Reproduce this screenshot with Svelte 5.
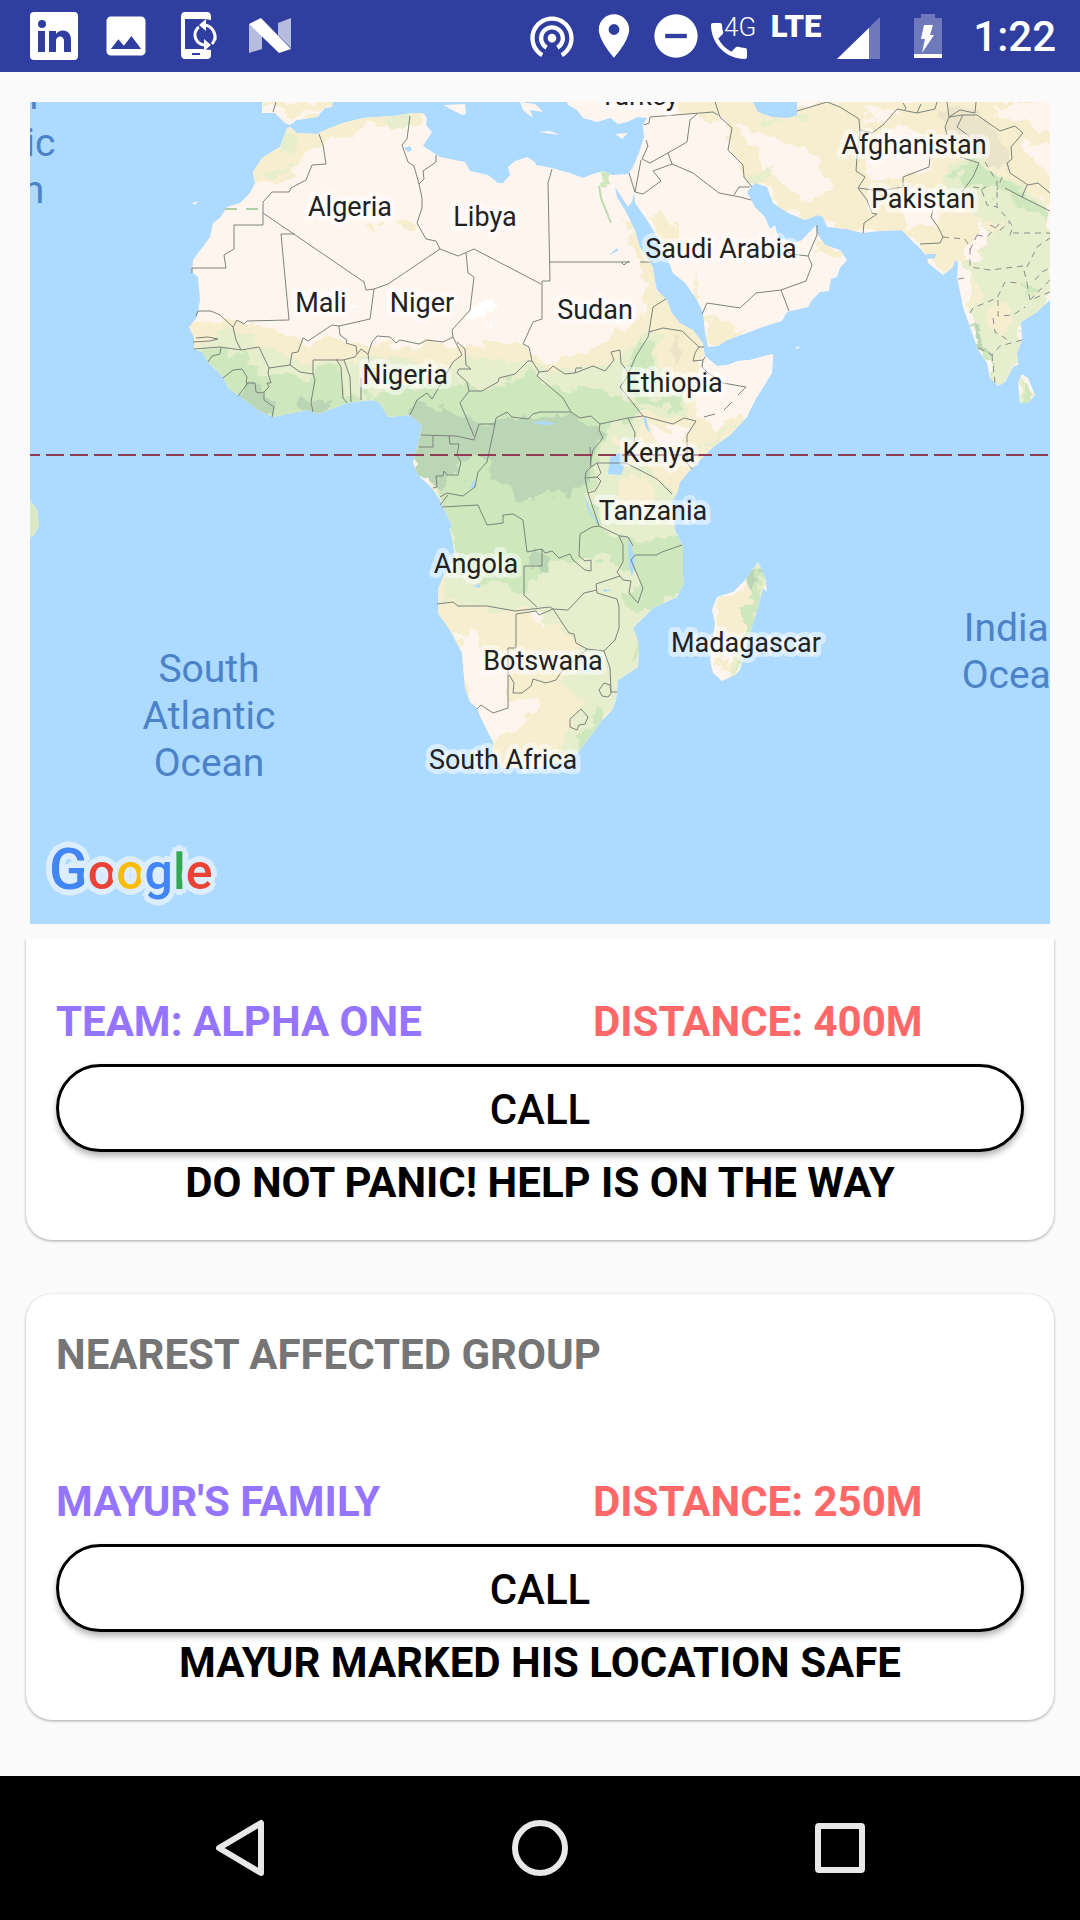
<script>
  const land =
    'M290 127 297 133 317 134 330 128 343 123 363 118 393 116 413 113 423 113 427 118 426 125 432 132 423 146 440 157 465 162 470 171 488 175 498 183 503 183 510 175 508 167 515 161 527 157 535 162 536 165 552 168 570 173 583 178 593 174 603 171 612 175 628 174 633 167 640 150 644 137 643 125 647 118 638 117 627 122 618 124 610 118 597 122 583 118 577 110 568 105 567 102 1050 102 1050 300 1037 312 1021 322 1022 340 1017 353 1018 365 1013 367 1005 382 998 386 990 378 987 363 978 350 970 327 963 307 957 277 958 263 955 259 953 267 943 275 928 263 927 257 920 248 913 242 902 230 880 231 862 233 847 229 827 227 823 217 818 215 805 220 788 213 773 203 767 187 755 183 747 192 755 207 765 217 770 229 775 225 778 237 795 243 802 240 816 225 817 233 825 245 840 250 847 260 840 268 837 277 831 279 829 291 820 292 812 300 808 307 787 312 782 321 760 328 747 333 727 340 718 346 707 347 703 345 705 356 717 366 728 365 738 361 750 360 773 354 772 373 755 400 747 417 730 435 713 447 692 468 680 482 677 493 671 503 675 530 683 547 683 577 684 583 677 597 653 608 633 628 639 643 638 667 618 680 616 700 612 710 602 720 593 733 578 752 567 760 543 767 515 768 502 768 493 753 493 742 482 720 477 708 470 702 465 687 462 653 450 630 438 613 438 590 443 577 455 560 453 543 450 530 452 525 443 507 440 500 432 488 418 475 413 463 418 443 422 425 410 415 388 417 380 403 372 400 347 403 318 414 307 410 273 417 258 410 238 395 228 388 223 377 208 362 202 352 194 349 194 337 189 327 197 317 200 300 198 277 192 272 193 260 210 237 213 223 220 218 227 207 240 203 250 193 255 183 253 172 262 158 280 147 287 128Z' +
    'M262 102 262 113 275 113 285 123 290 125 297 120 317 117 325 108 332 107 333 102Z' +
    'M443 105 462 115 466 114 465 104ZM520 102 523 110 533 118 530 110 543 112 535 104ZM538 132 560 135 550 131ZM615 134 622 139 628 133Z' +
    'M758 562 765 577 767 592 763 588 758 607 750 633 740 670 735 675 722 681 713 673 710 660 715 623 712 610 717 597 733 592 745 580Z' +
    'M1022 374 1028 378 1035 395 1028 403 1020 403 1018 383ZM30 500 37 510 39 525 34 535 30 537ZM192 203 198 201 195 205ZM795 348 800 346 798 349Z'

  const beige = [
    'M250 185 275 187 298 177 290 168 312 150 345 135 365 130 393 121 420 122 430 108 400 100 285 115 245 150Z',
    'M180 322 225 324 258 322 285 328 305 342 340 338 372 345 410 342 450 346 520 345 540 360 572 358 606 345 614 328 640 318 645 290 638 250 622 215 640 225 665 300 708 345 702 365 690 385 700 420 735 410 748 425 650 540 650 780 480 780 430 620 430 400 180 380Z',
    'M645 100 690 112 722 120 730 150 745 175 800 222 830 228 905 235 930 252 945 278 970 255 990 200 1000 185 1050 200 1050 100Z',
    'M645 220 660 210 678 225 682 245 668 250ZM690 270 704 296 696 300ZM705 315 716 318 745 333 708 350ZM816 240 840 250 836 258 820 254ZM715 600 745 580 758 600 735 670 715 668Z',
    'M262 100 335 100 332 108 290 125ZM370 225 382 222 376 232ZM395 220 420 222 412 233 398 228Z'
  ]
  const pink = [
    'M700 360 775 350 770 382 752 408 715 428 698 415 702 390Z',
    'M462 630 480 640 482 660 505 665 510 700 540 695 530 720 500 735 492 745 470 705 458 650Z',
    'M650 425 690 425 684 448 655 445ZM665 130 712 125 726 160 742 185 700 172 672 155Z',
    'M735 125 765 130 790 150 820 155 830 190 800 200 770 175ZM872 140 900 125 930 140 928 165 900 178 868 182ZM898 195 930 192 940 225 912 228ZM990 104 1050 104 1050 130 1030 125 1000 118Z',
    'M860 110 900 108 885 120 868 122ZM1022 140 1050 150 1050 175 1030 165Z',
    'M720 635 735 640 730 662 720 660ZM520 600 545 618 530 625Z'
  ]
  const light = [
    'M192 350 210 333 240 333 262 345 312 368 392 352 425 370 467 357 527 362 545 375 612 362 642 335 665 335 655 355 668 385 690 395 680 415 640 418 640 440 610 440 640 470 670 490 690 500 690 610 640 620 650 680 618 700 580 756 558 752 585 700 560 680 580 650 560 625 520 610 445 603 440 560 452 520 400 430 190 400Z',
    'M258 130 285 130 300 148 285 160 275 150ZM262 172 292 165 270 180ZM380 113 415 115 398 124ZM748 180 760 185 780 160 748 178Z',
    'M945 195 950 165 985 155 1000 175 1050 205 1050 305 1020 325 1020 360 1000 390 980 350 968 300 962 262 985 260 985 225 965 200Z',
    'M752 100 760 114 785 122 810 108 800 120 770 124ZM690 465 712 446 740 420 720 430Z',
    'M758 560 768 590 738 678 728 672 745 630ZM1015 370 1038 395 1020 406Z'
  ]
  const green = [
    'M195 352 225 348 245 358 262 372 300 378 338 368 345 400 380 395 440 375 475 392 530 375 560 385 595 382 620 395 645 415 605 425 600 465 590 490 605 530 640 545 688 530 688 590 640 612 625 600 640 580 615 560 560 560 520 590 460 575 445 515 440 490 400 430 320 420 270 425 195 370Z',
    'M640 340 655 350 650 375 640 395 660 400 690 395 670 410 635 405 628 375Z',
    'M950 175 975 160 990 165 1010 190 1050 208 1050 218 1000 195 970 182ZM1020 285 1035 290 1025 300ZM970 325 985 350 997 385 985 365Z',
    'M593 172 603 170 611 175 604 183ZM605 725 585 752 575 745 600 710ZM756 568 764 590 748 640 738 672 745 620Z',
    'M1022 380 1034 395 1022 404ZM635 625 645 650 630 660Z'
  ]
  const dark = [
    'M238 392 255 385 275 405 274 418 255 412ZM295 402 302 395 330 402 320 415 300 412ZM412 412 420 402 450 410 480 425 500 418 560 415 590 425 602 435 592 460 582 490 565 498 545 492 520 505 495 480 490 462 475 450 462 460 458 478 440 490 415 465Z',
    'M535 550 550 560 548 572 535 570ZM748 575 758 575 750 595ZM968 318 980 335 990 355 978 345Z'
  ]
  const grey = ['M940 115 960 112 990 130 1008 150 1008 170 985 155 955 150ZM965 118 985 116 1000 138 985 132ZM672 335 682 345 678 370 668 350Z']

  const borders =
    'M319 134 323 145 326 164 312 165 306 180 291 188 289 192 272 192 263 202 263 225 234 225 234 249 224 255 226 268 192 268 192 273' +
    'M263 213 364 282 366 290 374 289 388 284 440 249M295 234 281 234 289 320 247 321 244 324 237 320 233 327 220 315 211 311 198 311 196 316' +
    'M374 289 370 319 339 326 332 325 308 341 303 338 298 352 292 353 290 365 269 368M233 327 236 340 241 350 259 347 269 368 268 373 271 383 267 383 269 387 264 392 264 400 274 407 272 417' +
    'M194 349 220 347 241 350M196 338 208 337 218 339 210 341 193 342M221 347 220 354 212 356 208 362M223 378 233 370 242 369 247 377 246 383 255 383 256 392 260 393 264 392M248 383 238 396' +
    'M290 365 300 372 313 374 315 380 311 402 313 412M313 374 313 360 343 360 355 357 361 349 368 354 372 342 377 336 390 337M336 359 341 367 343 398 347 403M344 360 350 377 351 402M361 400 361 378M339 326 340 335 347 340 346 343 356 346 357 354M368 354 369 363' +
    'M410 116 407 139 402 145 408 162 414 166 419 184 422 198 422 208 417 223 426 239 436 241 440 249 458 256 474 249 541 284M436 155 436 162 423 171 424 179 419 184' +
    'M552 169 548 183 550 281 542 281 542 319 533 322 523 344 529 347 532 361 539 372M550 262 630 262M621 262 624 265 629 261M640 262 653 262' +
    'M466 253 468 273 474 277 470 310 452 330 453 337 443 342 427 340 419 344 400 340 396 343 390 337M453 337 462 355 453 362 443 380 432 399 427 393 417 400 410 415' +
    'M457 342 465 349 466 365 471 369 459 369 457 373 467 382 469 391 460 403 474 436M469 391 482 391 498 382 499 378 515 374 528 361 532 361' +
    'M539 372 537 376 563 398 571 412 580 418 591 416 600 424 628 418 643 416M571 412 540 412 533 414 528 419 512 417 507 412 496 418 495 424 479 424 474 440 456 436 421 435M495 424 487 462 478 472 475 487 463 496 447 493 440 497' +
    'M539 372 548 371 553 366 565 374 575 373 593 366 605 371 614 360 611 352 620 350 621 363 628 372M575 373 576 368 582 368' +
    'M666 299 653 307 649 332 648 337 636 356 627 377 620 387 643 416M649 332 663 328 682 331 699 347 704 347M699 347 695 353 693 361 703 360 705 357M703 360 702 367 708 373 723 383 746 387 738 395M732 402 724 410M715 414 704 417' +
    'M643 416 673 424 684 418 696 421 687 435 687 463 692 469M628 418 635 433 634 442M600 424 599 430 603 438 593 450 590 465M597 463 626 463 657 479 672 494' +
    'M590 447 591 467 586 472 585 478 588 493 599 526 620 536 628 537 633 546M591 467 597 463 601 473 597 477 601 481 595 491 588 493M585 478 597 477' +
    'M682 545 662 552 656 555 635 555 631 560 643 588 638 603 629 593 631 581 623 580 617 572 623 562 623 545 619 536' +
    'M599 526 592 527 580 534 579 556 585 561 591 560 591 571 585 570 573 560 570 554 559 558 552 551 545 553 542 549 527 552 523 520 513 514 503 515 503 523 487 525 478 505 442 507M440 505 448 495M542 549 542 566 524 566 524 595 537 607' +
    'M437 604 453 602 458 606 487 606 515 611 550 607 553 609 568 610 584 593 597 590M620 576 596 584 597 593 617 599 619 607 619 628 615 640 604 651 587 649 576 643 574 634 569 633 553 609' +
    'M508 708 508 648 516 648 516 614 536 611 539 615 553 609M508 673 514 683 513 693 522 693 531 686 533 679 546 683 556 680 562 671 587 649M477 709 481 705 493 713 508 708' +
    'M604 651 610 668 611 692 617 692M604 683 610 685 611 693 608 697 602 696 599 690ZM581 709 588 717 585 724 579 725 577 730 570 727 570 719Z' +
    'M419 447 433 447 433 436M449 436 450 444 459 444 457 455 461 462 458 475 447 475 444 471 443 476 436 476 437 487 433 488' +
    'M644 125 649 123 650 117 713 112 718 115M697 114 690 120 687 142 650 163 642 159 648 146 646 140M668 153 672 164 653 171 661 181 643 194 635 192 641 160M629 173 635 192M672 164 693 173 719 193 740 197 751 200M715 102 720 117 732 128 728 150 743 165 744 177 752 187M734 195 739 187 750 187' +
    'M702 314 707 303 740 308 756 293 781 290 806 281 812 265 808 256 817 235 817 225M781 290 789 311M808 256 790 254 780 242M797 111 827 102 840 107 859 119 860 133 857 157 856 171 865 177 858 188 867 200 872 213 877 214 864 223 863 233' +
    'M858 188 880 191 903 187 903 177 929 167 930 157M860 130 872 133 883 125 897 109 917 113 935 109 937 102M947 102 949 117 963 115 957 127 970 137M960 157 979 163 973 177 962 192M949 117 945 127 947 135M933 210 931 217 938 227 943 237 940 243 920 244' +
    'M903 103 906 108 904 111M917 113 921 104M949 117 960 110 975 113 976 102M963 115 977 115 1000 131 1015 126 1023 133 1011 147 1012 159 1007 163 1010 173 1028 185 1038 183 1050 193M1005 188 1022 197 1050 211M1027 185 1022 197M276 102 273 112'

  const states =
    'M985 162 997 182 997 207 1007 218 1013 227 1008 240M973 187 981 188 987 205 997 207M981 190 990 184M1002 177 997 190M943 237 965 239 970 247 970 267 990 270 1023 266 1027 283M977 235 987 237 1000 223M970 250 977 235M1013 233 1050 233M1027 267 1037 247 1050 238M970 313 973 308 997 298 1005 282 1020 283M998 300 998 316 1013 315 1025 307M993 318 995 332 1008 340M1022 340 1000 346 992 355 977 347M992 355 995 383M1030 300 1050 280M1027 283 1030 300 1050 292M1035 280 1042 272 1050 268M958 279 965 278M990 225 1000 230 1010 222'

  const labels = [
    ['Turkey', 639, 105], ['Afghanistan', 914, 154], ['Pakistan', 923, 208], ['Algeria', 350, 216],
    ['Libya', 485, 226], ['Saudi Arabia', 721, 258], ['Mali', 321, 312], ['Niger', 422, 312],
    ['Sudan', 595, 319], ['Nigeria', 405, 384], ['Ethiopia', 674, 392], ['Kenya', 659, 462],
    ['Tanzania', 653, 520], ['Angola', 476, 573], ['Madagascar', 746, 652], ['Botswana', 543, 670],
    ['South Africa', 503, 769]
  ]
  const oceans = [
    ['North', -11, 109], ['Atlantic', -11, 156], ['Ocean', -11, 203],
    ['South', 209, 682], ['Atlantic', 209, 729], ['Ocean', 209, 776],
    ['Indian', 1017, 641], ['Ocean', 1017, 688]
  ]
  const google = [['o', '#ea4335'], ['o', '#fbbc05'], ['g', '#4285f4'], ['l', '#34a853'], ['e', '#ea4335']]
</script>

{#snippet details(name, distance, note)}
  <div class="row">
    <p class="name">{name}</p>
    <p class="distance">{distance}</p>
  </div>
  <button class="call" type="button">CALL</button>
  <p class="note">{note}</p>
{/snippet}

<div class="screen">
  <header class="status">
    <div class="notices">
      <svg viewBox="28 10 52 52" aria-hidden="true">
        <rect x="30" y="12" width="48" height="48" rx="4" fill="#fff" />
        <g fill="#303f9f">
          <circle cx="42" cy="24" r="4" />
          <rect x="38" y="31" width="7" height="21" />
          <path d="M49 31h7v3c3-5 15-6 15 6v12h-7V41c0-6-8-6-8 0v11h-7z" />
        </g>
      </svg>
      <svg viewBox="0 0 24 24" aria-hidden="true">
        <path fill="#fff" d="M21 19V5c0-1.100-.9-2-2-2H5c-1.100 0-2 .9-2 2v14c0 1.100.9 2 2 2h14c1.100 0 2-.9 2-2zM8.500 13.500l2.500 3.010L14.500 12l4.500 6H5l3.500-4.500z" />
      </svg>
      <svg viewBox="174 10 52 52" aria-hidden="true">
        <path fill="#fff" fill-rule="evenodd" d="M187 12h22q4 0 4 5v3l-6-1h-20v30h16l10 1v5q0 4-4 4h-22q-4 0-4-5V17q0-5 4-5zM194 53v2h8v-2z" />
        <g fill="none" stroke="#fff" stroke-width="3">
          <path d="M207 25c7 1 11 8 10 15M217 38q-1 4-3 6" />
          <path d="M206 45c-7-1-11-8-8-15M198 31q1-3 3-4" />
        </g>
        <path fill="#fff" d="M208 19v12l-7-6zM206 39v12l7-6z" />
      </svg>
      <svg viewBox="244 10 52 52" aria-hidden="true">
        <path fill="#fff" opacity=".65" d="M249 24l13 11v14l-13 4zM278 23l13-5v30l-13-13z" />
        <path fill="#fff" d="M249 24l12-6 30 31-12 4z" />
      </svg>
    </div>
    <div class="tray">
      <svg viewBox="0 0 24 24" aria-hidden="true">
        <path fill="#fff" d="M12 11c-1.100 0-2 .9-2 2s.9 2 2 2 2-.9 2-2-.9-2-2-2zm6 2c0-3.310-2.690-6-6-6s-6 2.690-6 6c0 2.220 1.210 4.150 3 5.190l1-1.740c-1.190-.7-2-1.970-2-3.450 0-2.210 1.790-4 4-4s4 1.790 4 4c0 1.480-.81 2.750-2 3.450l1 1.740c1.790-1.040 3-2.970 3-5.190zM12 3C6.480 3 2 7.480 2 13c0 3.700 2.010 6.920 4.990 8.650l1-1.730C5.610 18.530 4 15.960 4 13c0-4.420 3.580-8 8-8s8 3.580 8 8c0 2.960-1.610 5.530-4 6.920l1 1.730c2.990-1.730 5-4.950 5-8.650 0-5.520-4.480-10-10-10z" />
      </svg>
      <svg viewBox="0 0 24 24" aria-hidden="true">
        <path fill="#fff" d="M12 2C8.130 2 5 5.130 5 9c0 5.250 7 13 7 13s7-7.750 7-13c0-3.870-3.130-7-7-7zm0 9.500a2.500 2.500 0 0 1 0-5 2.500 2.500 0 0 1 0 5z" />
      </svg>
      <svg viewBox="0 0 24 24" aria-hidden="true">
        <circle cx="12" cy="12" r="10" fill="#fff" />
        <path fill="#303f9f" d="M7 11h10v2H7z" />
      </svg>
      <svg class="volte" viewBox="708 10 48 52" aria-hidden="true">
        <path fill="#fff" transform="translate(704 17) scale(2)" d="M20 15.500c-1.250 0-2.450-.2-3.570-.57-.35-.11-.74-.03-1.020.24l-2.200 2.200c-2.830-1.440-5.150-3.750-6.590-6.590l2.200-2.210c.28-.26.36-.65.25-1C8.700 6.450 8.500 5.250 8.500 4c0-.55-.45-1-1-1H4c-.55 0-1 .45-1 1 0 9.390 7.610 17 17 17 .55 0 1-.45 1-1v-3.500c0-.55-.45-1-1-1z" />
        <text x="723" y="36" class="fourg">4G</text>
      </svg>
      <span class="lte">LTE</span>
      <svg class="signal" viewBox="837 10 44 52" aria-hidden="true">
        <path fill="#fff" opacity=".3" d="M880 17v42h-43z" />
        <path fill="#fff" d="M869 28v31h-32z" />
      </svg>
      <svg class="battery" viewBox="914 10 28 52" aria-hidden="true">
        <path fill="#fff" fill-opacity=".3" d="M921 14h14v4h7v36h-28V18h7z" />
        <path fill="#fff" d="M914 54h28v4h-28zM924 25h9l-3 10h4l-12 18 3-14h-4z" />
      </svg>
      <time class="clock">1:22</time>
    </div>
  </header>

  <main>
    <svg class="map" viewBox="30 102 1020 822" role="img" aria-label="Map of Africa">
      <defs>
        <clipPath id="land"><path d={land} /></clipPath>
        <filter id="ragged" x="0" y="0" width="100%" height="100%" filterUnits="objectBoundingBox">
          <feTurbulence type="fractalNoise" baseFrequency="0.05" numOctaves="4" seed="4" />
          <feDisplacementMap in="SourceGraphic" scale="26" xChannelSelector="R" yChannelSelector="G" />
        </filter>
      </defs>
      <rect x="30" y="102" width="1020" height="822" fill="#addaff" />
      <path d={land} fill="#fff5ef" />
      <g clip-path="url(#land)">
        <g filter="url(#ragged)">
          <rect x="0" y="60" width="1100" height="900" fill="none" />
          <path d={beige.join('')} fill="#f7eecf" />
          <path d={pink.join('')} fill="#fff5ef" />
          <path d={light.join('')} fill="#e6eece" />
          <path d={green.join('')} fill="#cee7bc" />
          <path d={dark.join('')} fill="#bbd6b5" />
          <path d={grey.join('')} fill="#e6dfc8" opacity=".7" />
          <path fill="#f7eecf" d="M965 270 985 300 970 308ZM985 225 1003 222 990 240ZM995 300 1012 305 1000 335 988 325ZM612 482 640 478 655 495 650 512 622 510Z" />
          <path fill="#fff" d="M475 307 495 304 488 316 470 318ZM483 326 492 322 484 328ZM350 308 360 310 352 312Z" />
        </g>
        <path d="M28 495h14v45H28z" fill="#dbe9c6" />
        <path d="M599 186l2 12 10 25" fill="none" stroke="#bcdcb0" stroke-width="2" />
      </g>
      <g fill="#addaff">
        <path d="M615 187 617 197 625 210 635 230 640 247 653 267 655 280 657 290 667 300 672 313 680 323 693 330 703 343 706 350 708 347 705 333 703 313 697 300 685 283 673 273 668 260 657 237 647 220 635 203 634 193 632 202 628 207Z" />
        <path d="M753 102 758 112 772 117 788 118 797 115 797 102Z" />
        <path d="M610 457 619 453 627 455 624 467 621 475 608 474ZM404 148 410 146 412 150 408 152ZM473 586 480 584 480 588ZM530 422 545 421 557 424 545 425ZM475 478 475 487 470 489ZM926 254 936 254 935 258 927 259Z" />
        <path d="M585 495 590 510 600 528 596 523 587 508ZM628 538 634 555 635 562 632 577 629 565ZM643 417 646 418 650 433 646 428ZM603 589 612 590 604 592ZM609 255 617 248 618 251Z" />
      </g>
      <path class="border" d={borders} />
      <path class="border states" d={states} />
      <path d="M225 209h12M246 209h12" stroke="#b0cfa8" stroke-width="2" />
      <path class="equator" d="M22 455H1050" />
      {#each oceans as [text, x, y]}
        <text class="ocean" {x} {y}>{text}</text>
      {/each}
      {#each labels as [text, x, y]}
        <text class="country" {x} {y}>{text}</text>
      {/each}
      <text class="google" x="49" y="889"><tspan class="initial" fill="#4285f4">G</tspan>{#each google as [letter, fill]}<tspan {fill}>{letter}</tspan>{/each}</text>
    </svg>

    <div class="list">
      <article class="card scrolled">
        {@render details('TEAM: ALPHA ONE', 'DISTANCE: 400M', 'DO NOT PANIC! HELP IS ON THE WAY')}
      </article>
      <article class="card">
        <h2>NEAREST AFFECTED GROUP</h2>
        {@render details("MAYUR'S FAMILY", 'DISTANCE: 250M', 'MAYUR MARKED HIS LOCATION SAFE')}
      </article>
    </div>
  </main>

  <nav class="keys">
    <button type="button" aria-label="Back">
      <svg viewBox="210 1818 60 60"><path d="M261 1823v50l-42-25z" /></svg>
    </button>
    <button type="button" aria-label="Home">
      <svg viewBox="510 1818 60 60"><circle cx="540" cy="1848" r="25" /></svg>
    </button>
    <button type="button" aria-label="Recent apps">
      <svg viewBox="810 1818 60 60"><rect x="818" y="1826" width="44" height="44" rx="1" /></svg>
    </button>
  </nav>
</div>

<style>
  :global(body) {
    margin: 0;
    background: #fafafa;
  }
  .screen {
    min-height: 100vh;
    display: flex;
    flex-direction: column;
    background: #fafafa;
    color: #000;
    font-family: Roboto, sans-serif;
    font-size: 42px;
    line-height: 50px;
  }
  .status {
    display: flex;
    justify-content: space-between;
    align-items: center;
    height: 72px;
    padding: 0 24px 0 28px;
    background: #303f9f;
    color: #fff;
  }
  .notices,
  .tray {
    display: flex;
    align-items: center;
  }
  .notices {
    gap: 20px;
  }
  .tray {
    gap: 10px;
  }
  .status svg {
    display: block;
    width: 52px;
    height: 52px;
    flex: none;
  }
  .status .volte {
    width: 48px;
    margin-left: -3px;
  }
  .status .signal {
    width: 44px;
    margin-left: 4px;
  }
  .status .battery {
    width: 28px;
    margin: 0 21px 0 23px;
  }
  .fourg {
    font-size: 26px;
    font-weight: 300;
    fill: #fff;
  }
  .lte {
    align-self: flex-start;
    padding: 0 2px 0 4px;
    font-size: 31px;
    font-weight: 900;
    line-height: 34px;
  }
  .clock {
    padding-top: 2px;
    font-weight: 500;
  }
  main {
    flex: 1;
    display: flex;
    flex-direction: column;
    padding-top: 30px;
  }
  .map {
    display: block;
    margin: 0 30px 15px;
    overflow: hidden;
  }
  .border {
    fill: none;
    stroke: #7c837b;
    stroke-width: 1;
  }
  .states {
    stroke: #8c8c8c;
    stroke-dasharray: 6 5;
  }
  .equator {
    stroke: #913c52;
    stroke-width: 2;
    stroke-dasharray: 18 6;
  }
  .country {
    font-size: 27px;
    text-anchor: middle;
    fill: #222;
    stroke: rgba(255, 255, 255, 0.5);
    stroke-width: 10px;
    stroke-linejoin: round;
    paint-order: stroke;
  }
  .ocean {
    font-size: 39px;
    text-anchor: middle;
    fill: #4c83c8;
  }
  .google {
    font-size: 50px;
    font-weight: 500;
    text-shadow:
      6px 0 #dceefe,
      -6px 0 #dceefe,
      0 6px #dceefe,
      0 -6px #dceefe,
      4px 4px #dceefe,
      -4px 4px #dceefe,
      4px -4px #dceefe,
      -4px -4px #dceefe,
      2px 2px #dceefe,
      -2px -2px #dceefe;
  }
  .initial {
    font-size: 57px;
  }
  .list {
    display: flex;
    flex-direction: column;
    gap: 54px;
    padding: 0 26px 56px;
    overflow: hidden;
  }
  .card {
    display: flex;
    flex-direction: column;
    padding: 36px 30px 32px;
    border-radius: 26px;
    background: #fff;
    box-shadow: 0 1px 3px rgba(0, 0, 0, 0.35);
  }
  .scrolled {
    padding-top: 58px;
    border-radius: 0 0 26px 26px;
  }
  h2,
  p {
    margin: 0;
    font-size: 42px;
    font-weight: 700;
  }
  h2 {
    margin-bottom: 97px;
    color: #757575;
  }
  .row {
    display: grid;
    grid-template-columns: 537fr 431fr;
    margin-bottom: 17px;
  }
  .name {
    color: #9575ff;
  }
  .distance {
    color: #ff6868;
  }
  .call {
    height: 88px;
    margin-bottom: 6px;
    padding-top: 4px;
    border: 3px solid #000;
    border-radius: 44px;
    background: #fff;
    box-shadow: 0 4px 6px rgba(0, 0, 0, 0.3);
    color: #000;
    font: 500 42px/50px Roboto, sans-serif;
  }
  .note {
    text-align: center;
  }
  .keys {
    display: grid;
    grid-template-columns: repeat(3, 1fr);
    height: 144px;
    padding: 0 90px;
    background: #000;
  }
  .keys button {
    display: grid;
    place-items: center;
    padding: 0;
    border: 0;
    background: none;
  }
  .keys svg {
    width: 60px;
    height: 60px;
    fill: none;
    stroke: #e8e8e8;
    stroke-width: 6;
    stroke-linejoin: round;
  }
</style>
